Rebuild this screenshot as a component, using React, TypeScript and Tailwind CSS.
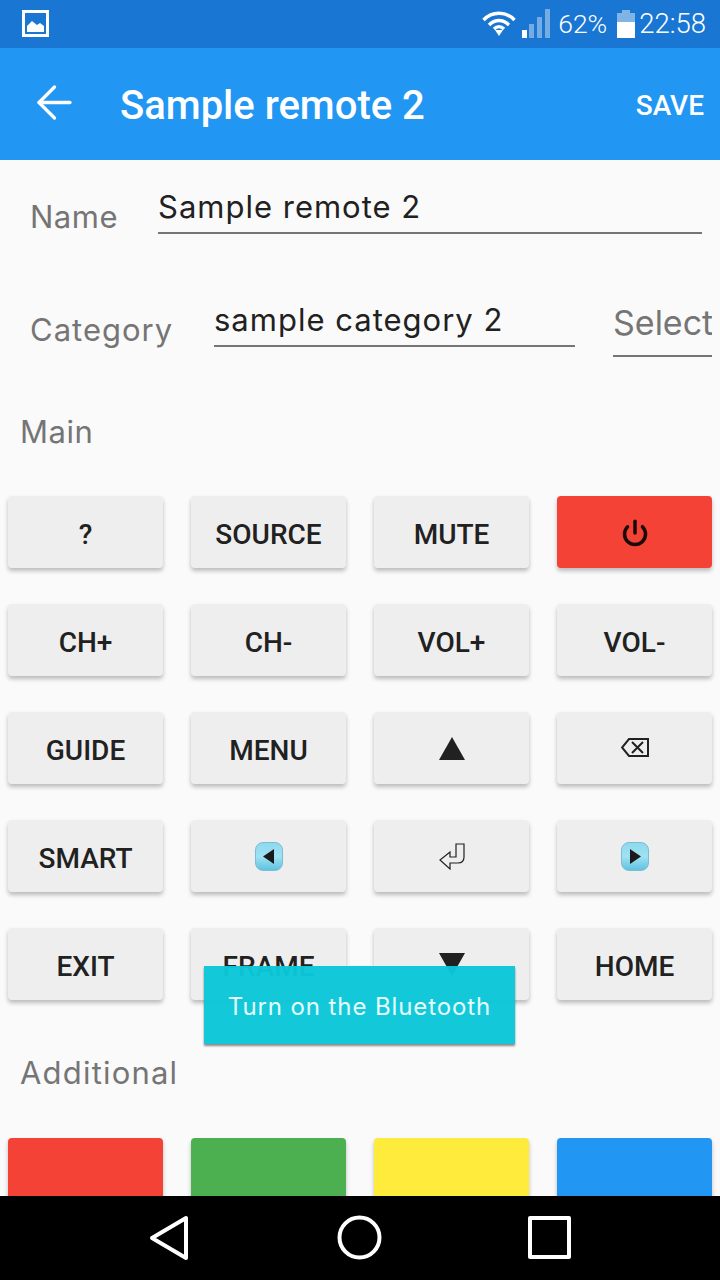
import { ArrowLeft, Power } from "lucide-react";
import type { ReactNode } from "react";

const formFont = "font-['Inter','Noto_Sans',sans-serif]";

function KeyButton({ children, className = "bg-[#eeeeee]" }: { children?: ReactNode; className?: string }) {
  return (
    <div
      className={`flex h-[72px] w-[155px] items-center justify-center rounded-[4px] font-['Roboto',sans-serif] text-[28px] font-medium tracking-normal text-[#212121] shadow-[0_3px_4px_rgba(0,0,0,0.25)] ${className}`}
    >
      {children}
    </div>
  );
}

function TextKey({ label }: { label: string }) {
  return (
    <KeyButton>
      <span className="mt-[5px]">{label}</span>
    </KeyButton>
  );
}

function GlossyArrow({ left }: { left?: boolean }) {
  return (
    <div className="flex h-[29px] w-[28px] items-center justify-center rounded-[8px] border border-[#7bbdd2] bg-gradient-to-b from-[#8fd9ee] via-[#9fe2f3] to-[#5fc2df]">
      <svg width="12" height="15" viewBox="0 0 12 15">
        <path d={left ? "M11 0V15L0 7.5Z" : "M1 0V15L12 7.5Z"} fill="#1a1a1a" />
      </svg>
    </div>
  );
}

export default function App() {
  return (
    <div className="relative flex h-[1280px] w-[720px] flex-col overflow-hidden bg-[#fafafa]">
      {/* status bar */}
      <div className="flex h-12 shrink-0 items-center justify-between bg-[#1976d2] pl-[22px] pr-[14px] text-white">
        <svg width="27" height="27" viewBox="0 0 27 27" className="mt-[-1px]">
          <path d="M0 0H27V27H0ZM3 3V24H24V3Z" fill="#fff" fillRule="evenodd" />
          <path d="M5 22V16L10 11L15 15L18 13L22 16V22Z" fill="#fff" />
        </svg>
        <div className="flex items-center font-['Roboto',sans-serif] text-[26.5px] font-light">
          <svg width="34" height="26" viewBox="0 0 34 26" className="mr-[6px] mt-[-3px]" fill="none" stroke="#fff" strokeWidth="3.4">
            <path d="M1.5 10C10 1 24 1 32.5 10" />
            <path d="M7 15C13 9 21 9 27 15" />
            <path d="M12 19C15 16 19 16 22 19" />
            <path d="M13 20H21L17 26Z" fill="#fff" stroke="none" />
          </svg>
          <svg width="28" height="29" viewBox="0 0 28 29" className="mr-[8px] mt-[-1px]">
            <rect x="0" y="21" width="5" height="8" fill="#fff" />
            <rect x="7" y="15" width="5" height="14" fill="#fff" fillOpacity="0.4" />
            <rect x="15" y="8" width="5" height="21" fill="#fff" fillOpacity="0.4" />
            <rect x="23" y="0" width="5" height="29" fill="#fff" fillOpacity="0.4" />
          </svg>
          <span>62%</span>
          <svg width="18" height="28" viewBox="0 0 18 28" className="ml-[10px] mr-[4px] mt-[-1px]">
            <path d="M5 0H13V3H18V12H0V3H5Z" fill="#fff" fillOpacity="0.45" />
            <rect x="0" y="12" width="18" height="16" fill="#fff" />
          </svg>
          <span className="text-[27.5px]">22:58</span>
        </div>
      </div>

      {/* app bar */}
      <div className="flex h-[112px] shrink-0 items-center bg-[#2196f3] pl-[28px] pr-[16px] text-white">
        <ArrowLeft size={53} strokeWidth={1.5} className="mt-[-3px]" />
        <div className="ml-[39px] flex-1 pt-1 font-['Roboto',sans-serif] text-[40px] font-medium">Sample remote 2</div>
        <div className="pt-1 font-['Roboto',sans-serif] text-[28px] font-medium">SAVE</div>
      </div>

      {/* form + keys */}
      <div className={`flex min-h-0 flex-1 flex-col overflow-hidden tracking-[1px] ${formFont}`}>
        <div className="flex items-start pl-[30px] pr-[18px] pt-[24px]">
          <div className="w-[128px] pt-[14px] text-[31px] leading-[38px] tracking-[0.5px] text-[#757575]">Name</div>
          <div className="h-[50px] flex-1 border-b-2 border-[#757575] text-[31px] leading-[46px] text-[#212121]">Sample remote 2</div>
        </div>
        <div className="flex items-start pl-[30px] pr-[8px] pt-[61px]">
          <div className="w-[184px] pt-[14px] text-[31px] leading-[38px] text-[#757575]">Category</div>
          <div className="h-[50px] w-[361px] border-b-2 border-[#757575] text-[31px] leading-[46px] text-[#212121]">sample category 2</div>
          <div className="ml-[38px] h-[60px] w-[99px] overflow-hidden whitespace-nowrap border-b-2 border-[#757575] text-[34px] leading-[52px] tracking-normal text-[#757575]">Select</div>
        </div>
        <div className="pl-5 pt-[56px] text-[31px] leading-[38px] tracking-[0.5px] text-[#757575]">Main</div>

        <div className="grid grid-cols-[repeat(4,155px)] gap-x-7 gap-y-9 pl-2 pt-[45px]">
          <TextKey label="?" />
          <TextKey label="SOURCE" />
          <TextKey label="MUTE" />
          <KeyButton className="bg-[#f44336]">
            <Power size={28} strokeWidth={3} className="mt-[1px] text-[#1a0a08]" />
          </KeyButton>
          <TextKey label="CH+" />
          <TextKey label="CH-" />
          <TextKey label="VOL+" />
          <TextKey label="VOL-" />
          <TextKey label="GUIDE" />
          <TextKey label="MENU" />
          <KeyButton>
            <svg width="26" height="23" viewBox="0 0 26 23"><path d="M13 0L26 23H0Z" fill="#212121" /></svg>
          </KeyButton>
          <KeyButton>
            <svg width="28" height="20" viewBox="0 0 28 20" fill="none" stroke="#212121" strokeWidth="2">
              <path d="M8 1H27V18H8L1 9.5Z" />
              <path d="M11 4L22 15M22 4L11 15" />
            </svg>
          </KeyButton>
          <TextKey label="SMART" />
          <KeyButton>
            <GlossyArrow left />
          </KeyButton>
          <KeyButton>
            <svg width="26" height="27" viewBox="0 0 26 27" fill="none" stroke="#212121" strokeWidth="1.2">
              <path d="M17 1H25V14C25 18 23 20 19 20H11V26L1 17L11 9V14H17Z" />
            </svg>
          </KeyButton>
          <KeyButton>
            <GlossyArrow />
          </KeyButton>
          <TextKey label="EXIT" />
          <TextKey label="FRAME" />
          <KeyButton>
            <svg width="26" height="23" viewBox="0 0 26 23"><path d="M0 0H26L13 23Z" fill="#212121" /></svg>
          </KeyButton>
          <TextKey label="HOME" />
        </div>

        <div className="pl-5 pt-[54px] text-[31px] leading-[38px] tracking-[1.2px] text-[#757575]">Additional</div>

        <div className="grid grid-cols-[repeat(4,155px)] gap-x-7 pl-2 pt-[46px]">
          <KeyButton className="bg-[#f44336]" />
          <KeyButton className="bg-[#4caf50]" />
          <KeyButton className="bg-[#ffeb3b]" />
          <KeyButton className="bg-[#2196f3]" />
        </div>
      </div>

      {/* toast */}
      <div className={`absolute left-[204px] top-[966px] flex h-[78px] w-[311px] items-center justify-center bg-[#0bc7d8]/97 pt-1 text-[24px] tracking-[0.9px] text-[#e6fbfd] shadow-[0_2px_2px_rgba(0,0,0,0.45)] ${formFont}`}>
        Turn on the Bluetooth
      </div>

      {/* nav bar */}
      <div className="flex h-[84px] shrink-0 items-center bg-black">
        <svg width="720" height="84" viewBox="0 0 720 84" fill="none" stroke="#fff" strokeWidth="4" strokeLinejoin="round">
          <path d="M186 22V62L152 42Z" />
          <circle cx="359.5" cy="41.5" r="20" />
          <rect x="530" y="22" width="39" height="39" />
        </svg>
      </div>
    </div>
  );
}
